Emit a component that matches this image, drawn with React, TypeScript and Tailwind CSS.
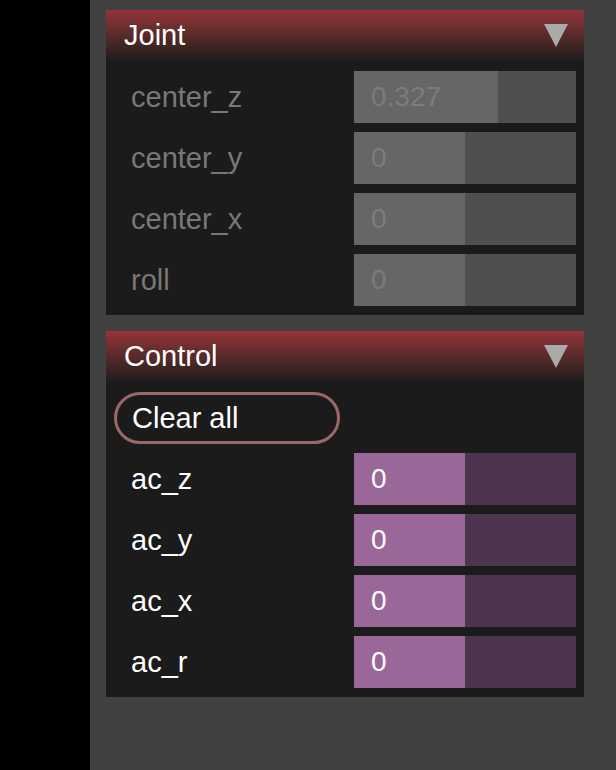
import type { ReactNode } from "react";

const font = "font-['Liberation_Sans',Arial,sans-serif]";

type Row = {
  label: string;
  value: string;
  pct: number;
};

const jointRows: Row[] = [
  { label: "center_z", value: "0.327", pct: 65 },
  { label: "center_y", value: "0", pct: 50 },
  { label: "center_x", value: "0", pct: 50 },
  { label: "roll", value: "0", pct: 50 },
];

const controlRows: Row[] = [
  { label: "ac_z", value: "0", pct: 50 },
  { label: "ac_y", value: "0", pct: 50 },
  { label: "ac_x", value: "0", pct: 50 },
  { label: "ac_r", value: "0", pct: 50 },
];

const Panel = ({ title, children }: { title: string; children: ReactNode }) => (
  <div className="w-[478px] bg-[#1b1b1b] pb-[9px]">
    <div className="h-[52px] flex items-center justify-between pl-[18px] pr-[16px] bg-gradient-to-b from-[#963338] to-[#1b1b1b]">
      <span className="text-white text-[29px] leading-none -mt-[2px]">{title}</span>
      <svg width="24" height="24" viewBox="0 0 24 24" className="-mt-[2px]">
        <polygon points="0,1 24,1 12,24" fill="#aaaaaa" />
      </svg>
    </div>
    <div className="flex flex-col gap-[9px] pt-[9px] pr-[8px]">{children}</div>
  </div>
);

const SliderRow = ({ row, disabled }: { row: Row; disabled?: boolean }) => (
  <div className="h-[52px] flex items-center">
    <span
      className={`
        w-[248px]
        pl-[25px]
        text-[29px]
        leading-none
        ${disabled ? "text-[#787878]" : "text-white"}
      `}
    >
      {row.label}
    </span>
    <div
      className={`
        relative
        w-[222px]
        h-[52px]
        ${disabled ? "bg-[#4f4f4f]" : "bg-[#4d3550]"}
      `}
    >
      <div
        className={`absolute inset-y-0 left-0 ${disabled ? "bg-[#666666]" : "bg-[#9a6799]"}`}
        style={{ width: `${row.pct}%` }}
      />
      <span
        className={`
          absolute
          left-[17px]
          top-[12px]
          text-[28px]
          leading-none
          ${disabled ? "text-[#7c7c7c]" : "text-white"}
        `}
      >
        {row.value}
      </span>
    </div>
  </div>
);

export default function App() {
  return (
    <div className={`flex w-[616px] h-[770px] bg-black ${font}`}>
      <div className="w-[90px]" />
      <div className="flex-1 bg-[#414141] pl-[16px] pt-[10px] flex flex-col gap-[16px]">
        <Panel title="Joint">
          {jointRows.map((r) => (
            <SliderRow key={r.label} row={r} disabled />
          ))}
        </Panel>

        <Panel title="Control">
          <div className="h-[52px] pl-[8px]">
            <button className="w-[226px] h-[52px] rounded-full border-[3px] border-[#9b6767] text-white text-[29px] leading-none text-left pl-[15px]">
              Clear all
            </button>
          </div>
          {controlRows.map((r) => (
            <SliderRow key={r.label} row={r} />
          ))}
        </Panel>
      </div>
    </div>
  );
}
